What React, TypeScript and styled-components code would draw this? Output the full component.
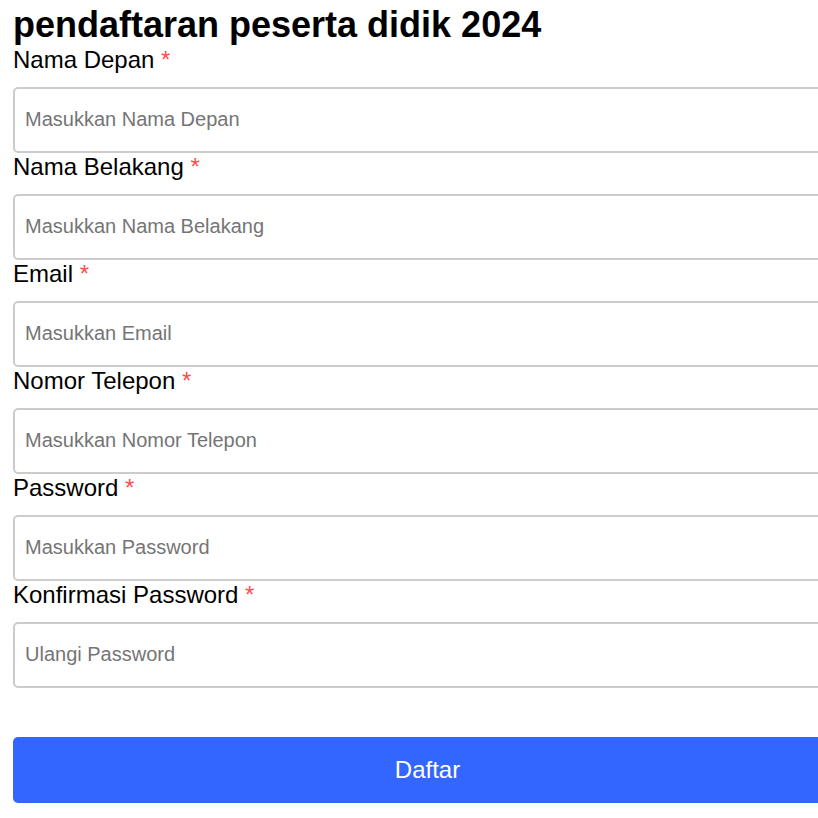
import React, { useEffect, useRef } from "react";
import styled, { createGlobalStyle } from "styled-components";

const GlobalStyle = createGlobalStyle`
  html, body {
    margin: 0;
    padding: 0;
    overflow: hidden;
    background: #ffffff;
  }
  body {
    font-family: "Liberation Sans", Arial, sans-serif;
    color: #000000;
  }
`;

const Page = styled.div`
  padding: 3.5px 0 0 13px;
  width: 805px;
`;

const Title = styled.h1`
  margin: 0;
  font-size: 36px;
  font-weight: 700;
  line-height: normal;
`;

const Form = styled.form`
  display: flex;
  flex-direction: column;
`;

const Field = styled.div`
  display: flex;
  flex-direction: column;
`;

const Label = styled.label`
  font-size: 24px;
  line-height: normal;
  margin-bottom: 13px;
`;

const Required = styled.span`
  color: #ff4d4f;
`;

const Input = styled.input`
  box-sizing: content-box;
  width: 100%;
  height: 62px;
  padding: 0 10px;
  margin: 0;
  border: 2px solid #cccccc;
  border-radius: 5px;
  font-family: "Liberation Sans", Arial, sans-serif;
  font-size: 20px;
  color: #000000;
  background: #ffffff;
  outline: none;
  caret-color: #000000;
  &::placeholder {
    color: #757575;
  }
`;

const SubmitButton = styled.button`
  box-sizing: content-box;
  width: 100%;
  height: 66px;
  margin-top: 49px;
  padding: 0 12px;
  border: none;
  border-radius: 5px;
  background: #3366ff;
  color: #ffffff;
  font-family: "Liberation Sans", Arial, sans-serif;
  font-size: 24px;
  cursor: pointer;
`;

const fields = [
  { id: "depan", label: "Nama Depan", placeholder: "Masukkan Nama Depan", type: "text" },
  { id: "belakang", label: "Nama Belakang", placeholder: "Masukkan Nama Belakang", type: "text" },
  { id: "email", label: "Email", placeholder: "Masukkan Email", type: "email" },
  { id: "telepon", label: "Nomor Telepon", placeholder: "Masukkan Nomor Telepon", type: "tel" },
  { id: "password", label: "Password", placeholder: "Masukkan Password", type: "password" },
  { id: "konfirmasi", label: "Konfirmasi Password", placeholder: "Ulangi Password", type: "password" },
];

export default function App() {
  const lastRef = useRef<HTMLInputElement>(null);

  useEffect(() => {
    lastRef.current?.focus({ preventScroll: true });
    window.scrollTo(0, 0);
  }, []);

  return (
    <>
      <GlobalStyle />
      <Page>
        <Title>pendaftaran peserta didik 2024</Title>
        <Form onSubmit={(e) => e.preventDefault()}>
          {fields.map((f, i) => (
            <Field key={f.id}>
              <Label htmlFor={f.id}>
                {f.label} <Required>*</Required>
              </Label>
              <Input
                id={f.id}
                type={f.type}
                placeholder={f.placeholder}
                ref={i === fields.length - 1 ? lastRef : undefined}
              />
            </Field>
          ))}
          <SubmitButton type="submit">Daftar</SubmitButton>
        </Form>
      </Page>
    </>
  );
}
